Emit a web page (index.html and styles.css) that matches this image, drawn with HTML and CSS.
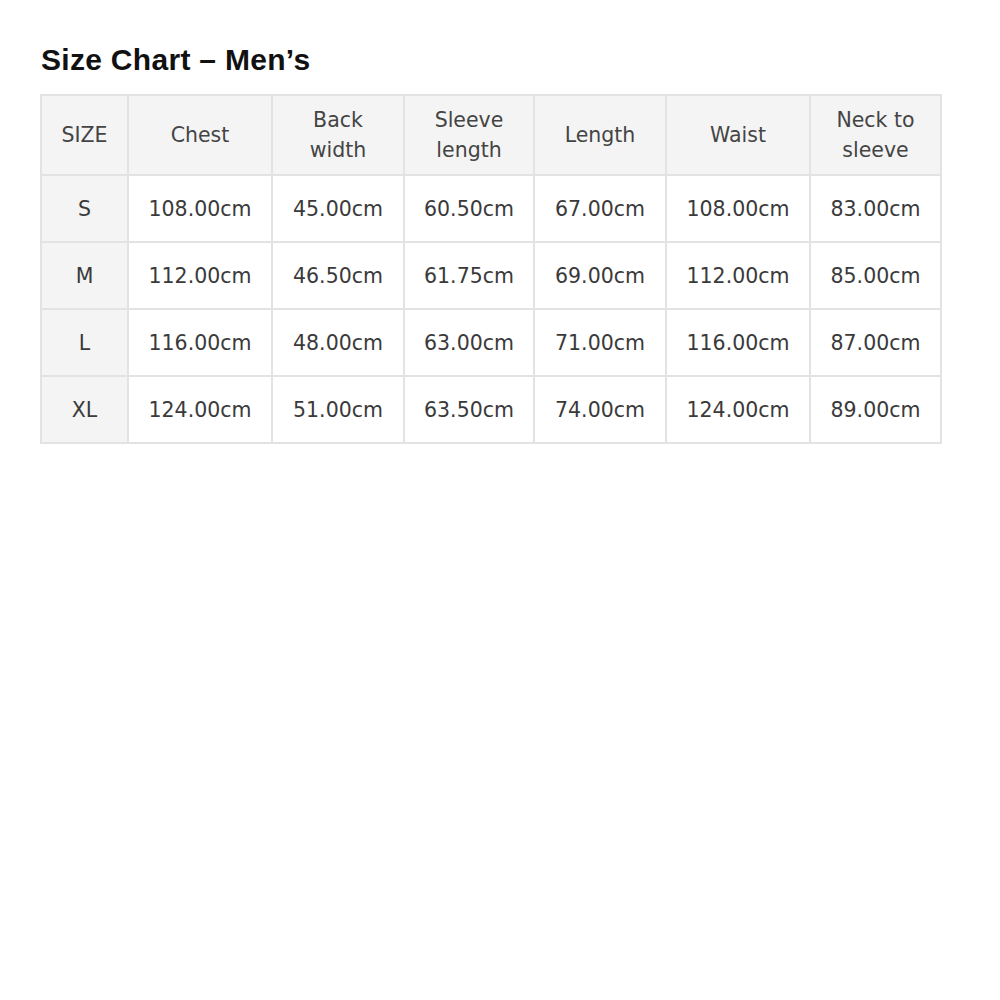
FILE: index.html
```html
<!DOCTYPE html>
<html>
<head>
<meta charset="utf-8">
<link rel="stylesheet" href="styles.css">
</head>
<body>
<div class="page">
  <h1 class="title">Size Chart – Men’s</h1>
  <table class="chart">
    <colgroup>
      <col class="c-size"><col class="c-chest"><col class="c-back"><col class="c-sleeve"><col class="c-length"><col class="c-waist"><col class="c-neck">
    </colgroup>
    <thead>
      <tr>
        <th>SIZE</th>
        <th>Chest</th>
        <th>Back<br>width</th>
        <th>Sleeve<br>length</th>
        <th>Length</th>
        <th>Waist</th>
        <th>Neck to<br>sleeve</th>
      </tr>
    </thead>
    <tbody>
      <tr><th>S</th><td>108.00cm</td><td>45.00cm</td><td>60.50cm</td><td>67.00cm</td><td>108.00cm</td><td>83.00cm</td></tr>
      <tr><th>M</th><td>112.00cm</td><td>46.50cm</td><td>61.75cm</td><td>69.00cm</td><td>112.00cm</td><td>85.00cm</td></tr>
      <tr><th>L</th><td>116.00cm</td><td>48.00cm</td><td>63.00cm</td><td>71.00cm</td><td>116.00cm</td><td>87.00cm</td></tr>
      <tr><th>XL</th><td>124.00cm</td><td>51.00cm</td><td>63.50cm</td><td>74.00cm</td><td>124.00cm</td><td>89.00cm</td></tr>
    </tbody>
  </table>
</div>
</body>
</html>
```
FILE: styles.css
```css
html, body {
  margin: 0;
  padding: 0;
  background: #ffffff;
}
.page {
  padding: 43px 40px 0 40px;
  font-family: "Liberation Sans", Arial, sans-serif;
}
.title {
  margin: 0 0 17px 1px;
  font-size: 30px;
  line-height: 34px;
  font-weight: bold;
  color: #111111;
  letter-spacing: 0.3px;
}
.chart {
  border-collapse: collapse;
  table-layout: fixed;
  width: 900px;
  color: #3a3a3a;
  font-family: "DejaVu Sans", "Liberation Sans", sans-serif;
  font-size: 20.5px;
  letter-spacing: 0;
}
.c-size { width: 87px; }
.c-chest { width: 144px; }
.c-back { width: 132px; }
.c-sleeve { width: 130px; }
.c-length { width: 132px; }
.c-waist { width: 144px; }
.c-neck { width: 131px; }
.chart th, .chart td {
  border: 2px solid #e3e3e3;
  text-align: center;
  vertical-align: middle;
  font-weight: normal;
  padding: 0;
}
.chart thead th {
  background: #f4f4f4;
  height: 78px;
  line-height: 30px;
  color: #444444;
}
.chart tbody th {
  background: #f4f4f4;
}
.chart tbody td, .chart tbody th {
  height: 65px;
}
```
